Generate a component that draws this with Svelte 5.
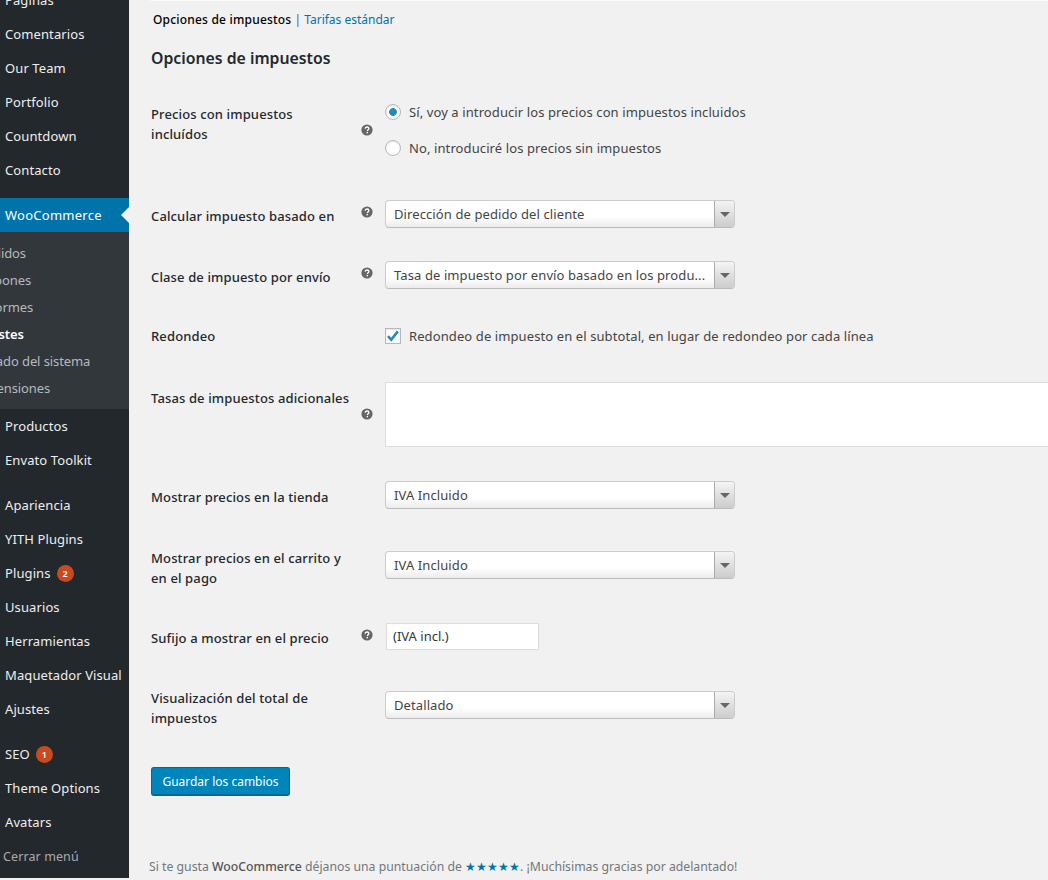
<script lang="ts">
	const topItems = ['Páginas', 'Comentarios', 'Our Team', 'Portfolio', 'Countdown', 'Contacto'];
	const subItems = ['Pedidos', 'Cupones', 'Informes', 'Ajustes', 'Estado del sistema', 'Extensiones'];
	const midItems = ['Productos', 'Envato Toolkit'];
	const lowItems = [
		{ name: 'Apariencia' },
		{ name: 'YITH Plugins' },
		{ name: 'Plugins', count: 2 },
		{ name: 'Usuarios' },
		{ name: 'Herramientas' },
		{ name: 'Maquetador Visual' },
		{ name: 'Ajustes' }
	];
	const endItems = [{ name: 'SEO', count: 1 }, { name: 'Theme Options' }, { name: 'Avatars' }];
</script>

{#snippet menuItem(item: { name: string; count?: number })}
	<li class="menu-item">
		{item.name}
		{#if item.count}<span class="count">{item.count}</span>{/if}
	</li>
{/snippet}

{#snippet help()}
	<svg class="help" viewBox="0 0 12 12" width="12" height="12" aria-hidden="true">
		<circle cx="6" cy="6" r="5.6" fill="#666" />
		<path d="M4.2 4.7c0-1.1.8-1.7 1.9-1.7 1 0 1.8.6 1.8 1.5 0 1.3-1.5 1.3-1.5 2.5" fill="none" stroke="#fff" stroke-width="1.3" />
		<rect x="5.6" y="7.9" width="1.4" height="1.4" fill="#fff" />
	</svg>
{/snippet}

{#snippet select(text: string)}
	<div class="select">
		<span class="select-value">{text}</span>
		<span class="select-arrow"><i></i></span>
	</div>
{/snippet}

<div class="page">
	<nav class="sidebar">
		<ul class="menu first">
			{#each topItems as name}
				{@render menuItem({ name })}
			{/each}
		</ul>
		<div class="menu-current">WooCommerce</div>
		<ul class="submenu">
			{#each subItems as name}
				<li class:on={name === 'Ajustes'}>{name}</li>
			{/each}
		</ul>
		<ul class="menu">
			{#each midItems as name}
				{@render menuItem({ name })}
			{/each}
		</ul>
		<ul class="menu spaced">
			{#each lowItems as item}
				{@render menuItem(item)}
			{/each}
		</ul>
		<ul class="menu spaced">
			{#each endItems as item}
				{@render menuItem(item)}
			{/each}
		</ul>
		<div class="collapse">Cerrar menú</div>
	</nav>

	<main class="content">
		<div class="tabs">
			<strong>Opciones de impuestos</strong> <span class="sep">|</span> <a href="#tarifas">Tarifas estándar</a>
		</div>
		<h2>Opciones de impuestos</h2>

		<form class="settings">
			<div class="row r-radios">
				<div class="label">Precios con impuestos incluídos</div>
				<div class="tip">{@render help()}</div>
				<div class="field radios">
					<div class="choice"><span class="radio checked"></span>Sí, voy a introducir los precios con impuestos incluidos</div>
					<div class="choice"><span class="radio"></span>No, introduciré los precios sin impuestos</div>
				</div>
			</div>

			<div class="row r-select">
				<div class="label">Calcular impuesto basado en</div>
				<div class="tip">{@render help()}</div>
				<div class="field">{@render select('Dirección de pedido del cliente')}</div>
			</div>

			<div class="row r-select">
				<div class="label">Clase de impuesto por envío</div>
				<div class="tip">{@render help()}</div>
				<div class="field">{@render select('Tasa de impuesto por envío basado en los produ...')}</div>
			</div>

			<div class="row r-check">
				<div class="label">Redondeo</div>
				<div class="tip"></div>
				<div class="field">
					<div class="choice">
						<span class="checkbox">
							<svg viewBox="0 0 16 16" width="16" height="16" aria-hidden="true"><path d="M3 8.2l3.2 3.6L12.8 3.4" fill="none" stroke="#1e8cbe" stroke-width="2.6" /></svg>
						</span>
						Redondeo de impuesto en el subtotal, en lugar de redondeo por cada línea
					</div>
				</div>
			</div>

			<div class="row r-area">
				<div class="label">Tasas de impuestos adicionales</div>
				<div class="tip">{@render help()}</div>
				<div class="field"><div class="textarea"></div></div>
			</div>

			<div class="row r-shop">
				<div class="label">Mostrar precios en la tienda</div>
				<div class="tip"></div>
				<div class="field">{@render select('IVA Incluido')}</div>
			</div>

			<div class="row r-two r-cart">
				<div class="label">Mostrar precios en el carrito y en el pago</div>
				<div class="tip"></div>
				<div class="field">{@render select('IVA Incluido')}</div>
			</div>

			<div class="row r-suffix">
				<div class="label">Sufijo a mostrar en el precio</div>
				<div class="tip">{@render help()}</div>
				<div class="field"><div class="input">(IVA incl.)</div></div>
			</div>

			<div class="row r-two r-total">
				<div class="label">Visualización del total de impuestos</div>
				<div class="tip"></div>
				<div class="field">{@render select('Detallado')}</div>
			</div>

			<button type="button" class="save">Guardar los cambios</button>
		</form>

		<p class="footer">Si te gusta <b>WooCommerce</b> déjanos una puntuación de <span class="stars">★★★★★</span>. ¡Muchísimas gracias por adelantado!</p>
	</main>
</div>

<style>
	:global(body) {
		margin: 0;
		background: #f1f1f1;
	}

	.page {
		display: flex;
		height: 880px;
		overflow: hidden;
		font-family: "Noto Sans", "Open Sans", sans-serif;
		font-size: 13px;
		color: #23282d;
	}

	ul {
		list-style: none;
		margin: 0;
		padding: 0;
	}

	/* ── Sidebar ── */
	.sidebar {
		flex: 0 0 129px;
		width: 129px;
		height: 878px;
		background: #23282d;
		color: #eee;
		overflow: hidden;
		white-space: nowrap;
		letter-spacing: 0.1px;
	}

	.menu.first {
		margin-top: -17px;
	}

	.menu.spaced {
		margin-top: 11px;
	}

	.menu-item {
		display: flex;
		align-items: center;
		height: 34px;
		padding-left: 5px;
	}

	.count {
		display: inline-block;
		width: 17px;
		height: 17px;
		margin-left: 6px;
		border-radius: 50%;
		background: #ca4a1f;
		color: #fff;
		font-size: 9px;
		font-weight: 600;
		line-height: 17px;
		text-align: center;
	}

	.menu-current {
		position: relative;
		height: 34px;
		margin-top: 11px;
		padding-left: 5px;
		background: #0073aa;
		color: #fff;
		line-height: 34px;
		letter-spacing: 0.25px;
	}

	.menu-current::after {
		content: '';
		position: absolute;
		right: 0;
		top: 9px;
		border: 8px solid transparent;
		border-right-color: #f1f1f1;
		border-left-width: 0;
	}

	.submenu {
		height: 177px;
		padding-top: 8px;
		box-sizing: border-box;
		background: #32373c;
		color: #b4b9be;
		letter-spacing: -0.1px;
	}

	.submenu li {
		height: 27px;
		margin-left: -22px;
		line-height: 27px;
	}

	.submenu li.on {
		color: #fff;
		font-weight: 600;
	}

	.collapse {
		height: 36px;
		padding-left: 3px;
		color: #aaa;
		font-size: 12.5px;
		line-height: 36px;
	}

	/* ── Content ── */
	.content {
		flex: 1;
		min-width: 0;
		padding-left: 21px;
	}

	.tabs {
		height: 20px;
		padding: 9px 0 0 3px;
		border-top: 1px solid #f9f9f9;
		font-size: 12px;
		line-height: 20px;
	}

	.tabs strong {
		font-weight: 500;
		color: #000;
		letter-spacing: 0.2px;
	}

	.tabs .sep {
		color: #555;
	}

	.tabs a {
		color: #0073aa;
		text-decoration: none;
	}

	h2 {
		height: 20px;
		margin: 18px 0 0 1px;
		font-size: 15.8px;
		font-weight: 600;
		line-height: 20px;
	}

	.settings {
		margin: 16px 0 0 1px;
	}

	.row {
		display: grid;
		grid-template-columns: 200px 34px 1fr;
	}

	.label {
		padding-top: 21px;
		font-weight: 500;
		line-height: 20px;
		letter-spacing: 0.13px;
	}

	.tip {
		padding: 21px 0 0 10px;
		line-height: 0;
	}

	.field {
		padding-top: 15px;
		min-width: 0;
	}

	.r-radios { height: 101px; }
	.r-select { height: 61px; }
	.r-check { height: 60px; }
	.r-area { height: 99px; }
	.r-shop { height: 70px; }
	.r-cart { height: 72px; }
	.r-suffix { height: 68px; }
	.r-total { height: 91px; }

	.r-radios .label { padding-top: 20px; }
	.r-radios .tip { padding-top: 40px; }
	.r-radios .field { padding-top: 18px; }
	.r-check .label { padding-top: 19px; }
	.r-check .field { padding-top: 19px; }
	.r-area .tip { padding-top: 41px; }
	.r-suffix .label { padding-top: 20px; }
	.r-two .label { padding-top: 12px; }

	.help {
		display: block;
	}

	.choice {
		display: flex;
		align-items: center;
		height: 20px;
		line-height: 20px;
		color: #444;
		white-space: nowrap;
		letter-spacing: 0.1px;
	}

	.radios .choice + .choice {
		margin-top: 16px;
	}

	.radio {
		flex: none;
		box-sizing: border-box;
		width: 16px;
		height: 16px;
		margin-right: 8px;
		border: 1px solid #b4b9be;
		border-radius: 50%;
		background: #fff;
		box-shadow: inset 0 1px 2px rgba(0, 0, 0, 0.1);
	}

	.radio.checked {
		background: radial-gradient(circle, #1e8cbe 0 3.5px, #fff 4.2px);
	}

	.checkbox {
		flex: none;
		box-sizing: border-box;
		width: 16px;
		height: 16px;
		margin-right: 8px;
		border: 1px solid #b4b9be;
		background: #fff;
		box-shadow: inset 0 1px 2px rgba(0, 0, 0, 0.1);
	}

	.checkbox svg {
		display: block;
		margin: -1px;
	}

	.select {
		display: flex;
		box-sizing: border-box;
		width: 350px;
		height: 28px;
		border: 1px solid #ccc;
		border-bottom-color: #bbb;
		border-radius: 4px;
		background: linear-gradient(#fff 60%, #ececec);
		color: #444;
		line-height: 26px;
		overflow: hidden;
	}

	.select-value {
		flex: 1;
		padding-left: 8px;
		white-space: nowrap;
		letter-spacing: 0.1px;
	}

	.select-arrow {
		flex: 0 0 19px;
		display: flex;
		align-items: center;
		justify-content: center;
		border-left: 1px solid #aaa;
		background: linear-gradient(#f4f4f4, #ccc);
	}

	.select-arrow i {
		border: 5px solid transparent;
		border-top: 5px solid #666;
		border-bottom-width: 0;
	}

	.textarea {
		box-sizing: border-box;
		width: 700px;
		height: 65px;
		border: 1px solid #ddd;
		background: #fff;
	}

	.input {
		box-sizing: border-box;
		width: 153px;
		height: 27px;
		margin-left: 1px;
		padding-left: 6px;
		border: 1px solid #ddd;
		background: #fff;
		color: #32373c;
		line-height: 25px;
	}

	.save {
		display: block;
		box-sizing: border-box;
		width: 139px;
		height: 29px;
		padding: 0;
		border: 1px solid #006799;
		border-bottom-width: 2px;
		border-radius: 3px;
		background: #0085ba;
		color: #fff;
		font-family: inherit;
		font-size: 12px;
	}

	.footer {
		margin: 63px 0 0 -1px;
		color: #72777c;
		font-size: 12.25px;
		line-height: 16px;
		white-space: nowrap;
	}

	.footer b {
		font-weight: 500;
		color: #555;
	}

	.stars {
		color: #0073aa;
	}
</style>
